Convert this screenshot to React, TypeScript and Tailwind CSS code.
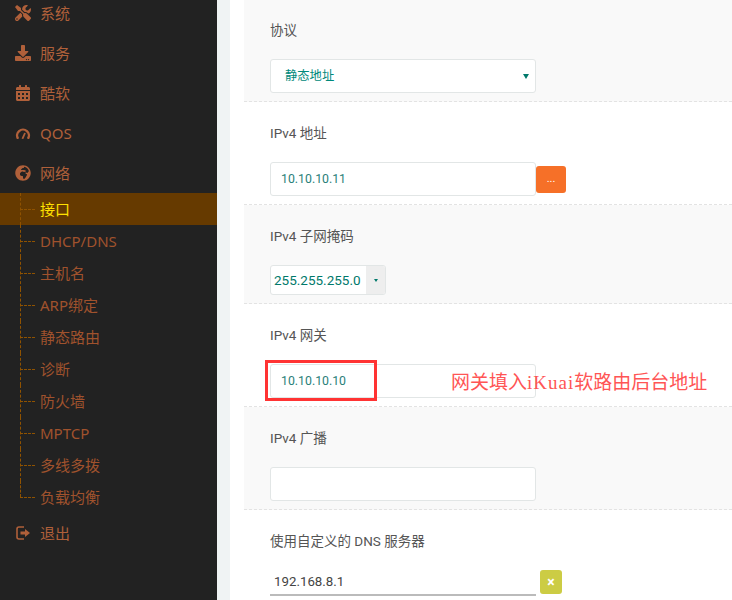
import { FaTools, FaDownload, FaCalendarAlt, FaGlobeAfrica } from "react-icons/fa";
import type { ReactNode } from "react";

const subItems = ["接口", "DHCP/DNS", "主机名", "ARP绑定", "静态路由", "诊断", "防火墙", "MPTCP", "多线多拨", "负载均衡"];

const cjk = "font-['Noto_Sans','Noto_Sans_CJK_SC',sans-serif]";
const form = "font-['Roboto','Noto_Sans_CJK_SC',sans-serif]";

function GaugeIcon() {
  return (
    <svg width="16" height="11" viewBox="0 0 16 11" fill="none" stroke="currentColor">
      <path d="M3.1 10.8A5.9 5.9 0 1 1 12.9 10.8" strokeWidth="2.4" />
      <path d="M7.4 10.8L10 5" strokeWidth="1.8" />
    </svg>
  );
}

function ExitIcon() {
  return (
    <svg className="ml-px" width="15" height="14" viewBox="0 0 15 14" fill="none">
      <path d="M8 1H3a2 2 0 0 0-2 2v8a2 2 0 0 0 2 2h5" stroke="currentColor" strokeWidth="1.6" />
      <path d="M4.5 5.5H9V3l5 4-5 4V8.5H4.5z" fill="currentColor" />
    </svg>
  );
}

function NavItem({ icon, label }: { icon: ReactNode; label: string }) {
  return (
    <div className="flex h-10 items-center text-[15px] text-[#b0603a]">
      <span className="flex w-10 justify-center pl-[6px] text-[16px]">{icon}</span>
      <span>{label}</span>
    </div>
  );
}

function SubMenu() {
  return (
    <div className="flex flex-col">
      {subItems.map((item, i) => (
        <div
          key={item}
          className={`relative flex h-8 items-center pl-10 text-[15px] ${i === 0 ? "bg-[#663a00] text-[#ffe000]" : "text-[#a0522d]"}`}
        >
          <span
            className={`absolute left-5 top-0 border-l border-dashed border-[#8f5200] ${i === subItems.length - 1 ? "h-4" : "h-8"}`}
          />
          <span className="absolute left-5 top-4 w-[15px] border-t border-dashed border-[#8f5200]" />
          {item}
        </div>
      ))}
    </div>
  );
}

function Section({ label, odd, children }: { label: string; odd?: boolean; children: ReactNode }) {
  return (
    <div className={`border-b border-dashed border-[#e3e3e3] pb-2 pl-[26px] pt-[21px] ${odd ? "bg-[#f9f9f9]" : "bg-white"}`}>
      <div className="mb-[19px] h-5 text-[13.5px] leading-5 text-[#555]">{label}</div>
      {children}
    </div>
  );
}

function TextBox({ value }: { value?: string }) {
  return (
    <div className="flex h-[34px] w-[266px] items-center rounded-[3px] border border-[#e2e6e6] bg-white pl-[10px] pt-px text-[12.3px] text-[#2b7f7a]">
      {value}
    </div>
  );
}

export default function App() {
  return (
    <div className={`relative flex h-[600px] w-[732px] overflow-hidden bg-white ${form}`}>
      <aside className={`-mt-[7px] h-[607px] w-[217px] shrink-0 bg-[#222] ${cjk}`}>
        <NavItem icon={<FaTools />} label="系统" />
        <NavItem icon={<FaDownload />} label="服务" />
        <NavItem icon={<FaCalendarAlt />} label="酷软" />
        <NavItem icon={<GaugeIcon />} label="QOS" />
        <NavItem icon={<FaGlobeAfrica />} label="网络" />
        <SubMenu />
        <NavItem icon={<ExitIcon />} label="退出" />
      </aside>
      <div className="w-[13px] shrink-0 bg-[#f0f3f4]" />
      <div className="w-[14px] shrink-0 bg-white" />
      <main className="-mt-px flex-1">
        <Section label="协议" odd>
          <div className="flex h-[34px] w-[266px] items-center justify-between rounded-[3px] border border-[#e2e6e6] bg-white pl-[14px] pr-[6px] text-[12.3px] text-[#00897b]">
            <span>静态地址</span>
            <span className="h-0 w-0 border-x-[3px] border-t-[5px] border-x-transparent border-t-[#00796b]" />
          </div>
        </Section>
        <Section label="IPv4 地址">
          <div className="flex items-start">
            <TextBox value="10.10.10.11" />
            <div className="mt-1 flex h-[27px] w-[30px] items-center justify-center rounded-[3px] bg-[#f67028] text-[11px] text-white">...</div>
          </div>
        </Section>
        <Section label="IPv4 子网掩码" odd>
          <div className="flex h-[30px] w-[116px] items-stretch overflow-hidden rounded-[3px] border border-[#e2e6e6] bg-white text-[13.5px] text-[#00796b]">
            <span className="flex w-[95px] items-center pl-[3px]">255.255.255.0</span>
            <span className="flex flex-1 items-center justify-center bg-[#eee]">
              <span className="h-0 w-0 border-x-[2px] border-t-[3px] border-x-transparent border-t-[#00796b]" />
            </span>
          </div>
        </Section>
        <Section label="IPv4 网关">
          <TextBox value="10.10.10.10" />
        </Section>
        <Section label="IPv4 广播" odd>
          <TextBox />
        </Section>
        <Section label="使用自定义的 DNS 服务器">
          <div className="flex items-start">
            <div className="flex h-[26px] w-[266px] items-center border-b-2 border-[#bbb] pl-1 text-[13.3px] text-[#444]">192.168.8.1</div>
            <div className="ml-1 flex h-6 w-[22px] items-center justify-center rounded-[3px] bg-[#cccc44] text-[14px] font-bold text-white">×</div>
          </div>
        </Section>
      </main>
      <div className="absolute left-[265px] top-[360px] h-[41px] w-[112px] border-[3px] border-[#f33]" />
      <div className="absolute left-[451px] top-[372px] whitespace-nowrap font-['Liberation_Serif','Noto_Sans_CJK_SC',serif] text-[19px] leading-[22px] text-[#f55]">
        网关填入<span className="tracking-[1px]">iKuai</span>软路由后台地址
      </div>
    </div>
  );
}
